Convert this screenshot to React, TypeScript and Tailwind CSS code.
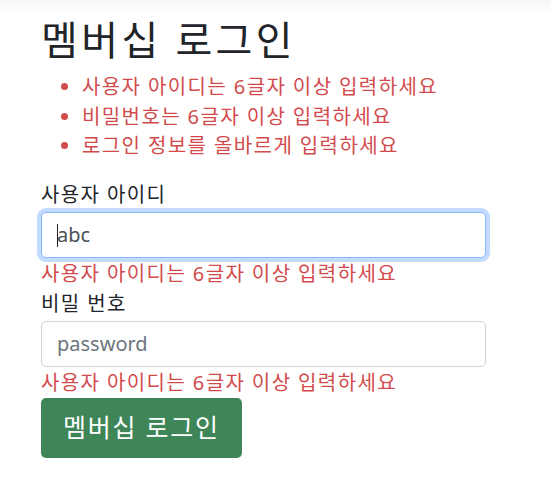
const errors = [
  "사용자 아이디는 6글자 이상 입력하세요",
  "비밀번호는 6글자 이상 입력하세요",
  "로그인 정보를 올바르게 입력하세요",
];

const App = () => {
  return (
    <div className="min-h-[491px] bg-[linear-gradient(#f6f6f6,#ffffff_12px)] font-['Noto_Sans','Noto_Sans_CJK_KR',sans-serif] text-[#212529]">
      <div className="pl-[41px] pt-[16px] w-[445px] box-content">
        <h1 className="text-[40px] leading-[48px] font-normal tracking-[0.085em]">멤버십 로그인</h1>

        <ul className="mt-[8px] list-disc pl-[41px] text-[20px] leading-[29.5px] tracking-[0.07em] text-[#d24b4c] marker:text-[#d24b4c]">
          {errors.map((msg) => (
            <li key={msg}>{msg}</li>
          ))}
        </ul>

        <form className="mt-[19px] flex flex-col">
          <label htmlFor="userId" className="text-[20px] leading-[30px] tracking-[0.07em] mb-[2px]">
            사용자 아이디
          </label>
          <div className="relative">
            <input
              id="userId"
              readOnly
              value="abc"
              className="w-full h-[46px] px-[15px] text-[20px] text-[#495057] bg-white border border-[#86b7fe] rounded-[5px] ring-4 ring-[#0d6efd]/25 outline-none"
            />
            <span className="absolute left-[16px] top-[12px] h-[23px] w-px bg-[#222]"></span>
          </div>
          <p className="mt-[1px] text-[20px] leading-[30px] tracking-[0.07em] text-[#d24b4c]">
            사용자 아이디는 6글자 이상 입력하세요
          </p>

          <label htmlFor="password" className="text-[20px] leading-[30px] tracking-[0.07em] mb-[2px]">
            비밀 번호
          </label>
          <input
            id="password"
            type="password"
            placeholder="password"
            className="w-full h-[46px] px-[15px] text-[20px] text-[#495057] placeholder:text-[#6c757d] bg-white border border-[#ced4da] rounded-[5px] outline-none"
          />
          <p className="mt-[1px] text-[20px] leading-[30px] tracking-[0.07em] text-[#d24b4c]">
            사용자 아이디는 6글자 이상 입력하세요
          </p>

          <div>
            <button
              type="button"
              className="h-[60px] px-[22px] rounded-[5px] bg-[#3e8558] text-white text-[25px] leading-[37px] tracking-[0.07em]"
            >
              멤버십 로그인
            </button>
          </div>
        </form>
      </div>
    </div>
  );
};

export default App;
